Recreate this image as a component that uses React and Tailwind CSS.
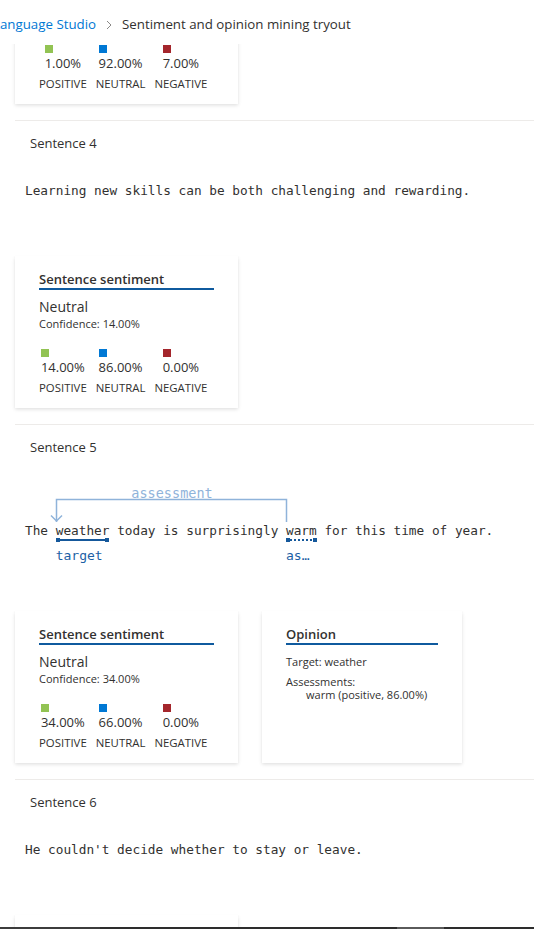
import React from 'react';

const SWATCH = {
  positive: 'bg-[#92c353]',
  neutral: 'bg-[#0078d4]',
  negative: 'bg-[#a4262c]',
};

// One score column: square + value, then the label under it
function Score({ tone, value, label }) {
  return (
    <div className="flex flex-col items-center">
      <div className="flex flex-col items-start">
        <span className={`block w-[8px] h-[8px] ${SWATCH[tone]}`} />
        <span className="mt-[1px] text-[13px] leading-[18px] text-[#323130]">{value}</span>
      </div>
      <span className="mt-[5px] text-[11.4px] leading-[14px] text-[#323130]">{label}</span>
    </div>
  );
}

function SentimentCard({ label, confidence, scores }) {
  return (
    <div className="w-[223px] h-[152px] bg-white px-[24px] pt-[14px] shadow-[0_1.6px_3.6px_rgba(0,0,0,0.13),0_0.3px_0.9px_rgba(0,0,0,0.11)]">
      <div className="text-[13px] leading-[18px] font-semibold text-[#323130] border-b-2 border-[#0f5a9e]">
        Sentence sentiment
      </div>
      <div className="mt-[7px] text-[14px] leading-[20px] text-[#323130]">{label}</div>
      <div className="text-[11px] leading-[14px] text-[#323130]">Confidence: {confidence}</div>
      <div className="mt-[18px] flex gap-[9px]">
        <Score tone="positive" value={scores[0]} label="POSITIVE" />
        <Score tone="neutral" value={scores[1]} label="NEUTRAL" />
        <Score tone="negative" value={scores[2]} label="NEGATIVE" />
      </div>
    </div>
  );
}

function OpinionCard() {
  return (
    <div className="w-[200px] h-[152px] bg-white px-[24px] pt-[14px] shadow-[0_1.6px_3.6px_rgba(0,0,0,0.13),0_0.3px_0.9px_rgba(0,0,0,0.11)]">
      <div className="text-[13px] leading-[18px] font-semibold text-[#323130] border-b-2 border-[#0f5a9e]">
        Opinion
      </div>
      <div className="mt-[10px] text-[11px] leading-[14px] text-[#323130]">Target: weather</div>
      <div className="mt-[6px] text-[11px] leading-[13px] text-[#323130]">Assessments:</div>
      <div className="pl-[20px] text-[11px] leading-[13px] text-[#323130]">warm (positive, 86.00%)</div>
    </div>
  );
}

function Section({ title, children }) {
  return (
    <section className="ml-[15px] border-t border-[#edebe9] pt-[13px] pb-4">
      <div className="pl-[15px] text-[13px] leading-[18px] text-[#323130]">{title}</div>
      {children}
    </section>
  );
}

function Sentence({ children }) {
  return (
    <p className="mt-[30px] ml-[10px] font-['DejaVu_Sans_Mono',monospace] text-[12.75px] leading-[18px] text-[#323130] whitespace-pre">
      {children}
    </p>
  );
}

// annotated word: underline + tag label under it
function Tagged({ word, tag, dotted }) {
  return (
    <span className="relative inline-block">
      {word}
      <span
        className={
          dotted
            ? 'absolute left-[1px] right-[1px] top-[17px] h-0 border-t-2 border-dotted border-[#15589b]'
            : 'absolute left-[1px] right-[1px] top-[17px] h-[2px] bg-[#15589b]'
        }
      />
      <span className="absolute left-0 top-[16px] w-[4px] h-[4px] bg-[#15589b]" />
      <span className="absolute right-0 top-[16px] w-[4px] h-[4px] bg-[#15589b]" />
      <span className="absolute left-0 top-[25px] text-[13px] leading-[18px] text-[#1c5fa5]">{tag}</span>
    </span>
  );
}

function ArcSentence() {
  return (
    <div className="relative mt-[30px] ml-[10px] pt-[36px] font-['DejaVu_Sans_Mono',monospace] text-[12.75px] leading-[18px] text-[#323130] whitespace-pre">
      <svg className="absolute left-0 top-0 overflow-visible" width="300" height="36">
        <path d="M31.5 36 V13.5 H261.5 V36" fill="none" stroke="#8fb3da" strokeWidth="1.5" />
        <path d="M26 29.5 L31.5 35 L37 29.5" fill="none" stroke="#8fb3da" strokeWidth="1.5" />
        <text x="147" y="12" textAnchor="middle" fontSize="13.5" fill="#8fb3da" fontFamily="DejaVu Sans Mono, monospace">
          assessment
        </text>
      </svg>
      The <Tagged word="weather" tag="target" /> today is surprisingly <Tagged word="warm" tag="as…" dotted /> for this time of year.
    </div>
  );
}

export default function App() {
  return (
    <div className="w-[534px] h-[929px] flex flex-col bg-white overflow-hidden font-['Open_Sans',sans-serif]">
      <header className="h-[44px] shrink-0 flex items-center gap-[10px] ml-[-7px] pt-[6px] text-[13.3px]">
        <span className="text-[#0078d4]">Language Studio</span>
        <svg width="6" height="10" viewBox="0 0 6 10">
          <path d="M1 1 L5 5 L1 9" fill="none" stroke="#8a8886" strokeWidth="1" />
        </svg>
        <span className="text-[#323130]">Sentiment and opinion mining tryout</span>
      </header>

      <main className="flex-1 overflow-hidden">
        <div className="mt-[-92px]">
          <div className="ml-[15px] pb-4">
            <SentimentCard label="Neutral" confidence="92.00%" scores={['1.00%', '92.00%', '7.00%']} />
          </div>

          <Section title="Sentence 4">
            <Sentence>Learning new skills can be both challenging and rewarding.</Sentence>
            <div className="mt-[56px]">
              <SentimentCard label="Neutral" confidence="14.00%" scores={['14.00%', '86.00%', '0.00%']} />
            </div>
          </Section>

          <Section title="Sentence 5">
            <ArcSentence />
            <div className="mt-[71px] flex gap-[24px]">
              <SentimentCard label="Neutral" confidence="34.00%" scores={['34.00%', '66.00%', '0.00%']} />
              <OpinionCard />
            </div>
          </Section>

          <Section title="Sentence 6">
            <Sentence>He couldn't decide whether to stay or leave.</Sentence>
            <div className="mt-[56px]">
              <SentimentCard label="Neutral" confidence="50.00%" scores={['10.00%', '50.00%', '40.00%']} />
            </div>
          </Section>
        </div>
      </main>

      <div className="h-[2px] shrink-0 flex">
        <div className="w-[100px] bg-[#3c3c3c]" />
        <div className="w-[297px] bg-[#2d2d2d]" />
        <div className="w-[47px] bg-[#5a5a5a]" />
        <div className="flex-1 bg-[#2d2d2d]" />
      </div>
    </div>
  );
}
